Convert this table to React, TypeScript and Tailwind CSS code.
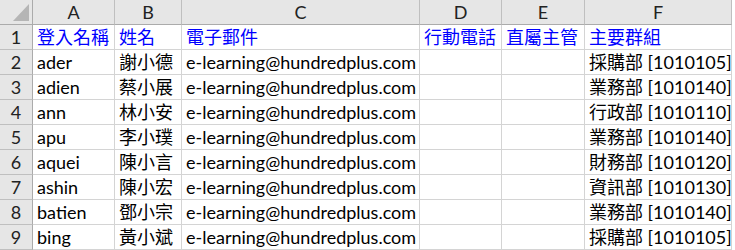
const columns = ["A", "B", "C", "D", "E", "F"];

const header = ["登入名稱", "姓名", "電子郵件", "行動電話", "直屬主管", "主要群組"];

const users = [
  ["ader", "謝小德", "採購部 [1010105]"],
  ["adien", "蔡小展", "業務部 [1010140]"],
  ["ann", "林小安", "行政部 [1010110]"],
  ["apu", "李小璞", "業務部 [1010140]"],
  ["aquei", "陳小言", "財務部 [1010120]"],
  ["ashin", "陳小宏", "資訊部 [1010130]"],
  ["batien", "鄧小宗", "業務部 [1010140]"],
  ["bing", "黃小斌", "採購部 [1010105]"],
];

const font = "font-['Lato','Noto_Sans_CJK_TC',sans-serif]";

function Cell({ children, blue }: { children?: React.ReactNode; blue?: boolean }) {
  return (
    <div
      className={`h-[25px] border-r border-b border-[#d4d4d4] pl-[4px] flex items-end pb-[1px] text-[18px] leading-[22px] whitespace-nowrap overflow-hidden ${
        blue ? "text-[#0000ff]" : "text-black"
      }`}
    >
      {children}
    </div>
  );
}

function RowHead({ n }: { n: number }) {
  return (
    <div className="h-[25px] bg-[#e6e6e6] border-r border-b border-r-[#ababab] border-b-[#bfbfbf] flex items-end justify-center pb-[1px] text-[18px] leading-[22px] text-[#222]">
      {n}
    </div>
  );
}

export default function App() {
  return (
    <div className={`w-[735px] h-[250px] bg-white overflow-hidden ${font}`}>
      <div className="grid grid-cols-[33px_82px_67px_238px_82px_83px_147px]">
        {/* column headers */}
        <div className="h-[25px] bg-[#e6e6e6] border-r border-b border-[#ababab] flex items-end justify-end pr-[3px] pb-[3px]">
          <svg width="16" height="17" viewBox="0 0 16 17">
            <polygon points="16,0 16,17 0,17" fill="#b5b5b5" />
          </svg>
        </div>
        {columns.map((c) => (
          <div
            key={c}
            className="h-[25px] bg-[#e6e6e6] border-r border-b border-r-[#bfbfbf] border-b-[#ababab] flex items-end justify-center pb-[1px] text-[18px] leading-[22px] text-[#222]"
          >
            {c}
          </div>
        ))}

        {/* row 1: field names */}
        <RowHead n={1} />
        {header.map((h) => (
          <Cell key={h} blue>
            {h}
          </Cell>
        ))}

        {users.map(([login, name, group], i) => (
          <div key={login} className="contents">
            <RowHead n={i + 2} />
            <Cell>{login}</Cell>
            <Cell>{name}</Cell>
            <Cell>e-learning@hundredplus.com</Cell>
            <Cell />
            <Cell />
            <Cell>{group}</Cell>
          </div>
        ))}
      </div>
    </div>
  );
}
